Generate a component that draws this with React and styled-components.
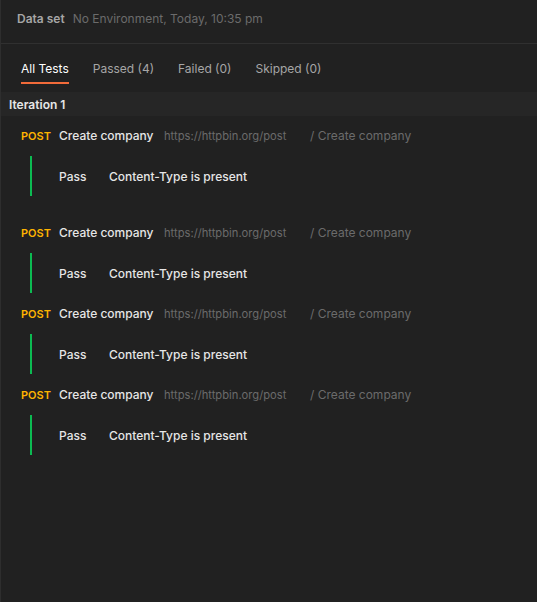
import React from "react";
import styled, { createGlobalStyle } from "styled-components";

const GlobalStyle = createGlobalStyle`
  html, body {
    margin: 0;
    padding: 0;
    background: #212121;
  }
  body {
    font-family: Inter, "Noto Sans", sans-serif;
    -webkit-font-smoothing: antialiased;
  }
`;

const Panel = styled.div`
  width: 537px;
  height: 602px;
  box-sizing: border-box;
  background: #212121;
  border-left: 1px solid #2e2e2e;
  overflow: hidden;
`;

const Header = styled.div`
  display: flex;
  align-items: center;
  gap: 8px;
  height: 44px;
  padding: 0 16px 7px;
  box-sizing: border-box;
  border-bottom: 1px solid #303030;
  font-size: 12px;
`;

const HeaderLabel = styled.span`
  color: #a6a6a6;
  font-weight: 600;
`;

const HeaderMeta = styled.span`
  color: #6b6b6b;
`;

const Tabs = styled.div`
  display: flex;
  gap: 24px;
  padding: 0 20px;
  height: 40px;
  margin-bottom: 8px;
  align-items: stretch;
`;

const Tab = styled.div`
  display: flex;
  align-items: center;
  font-size: 12px;
  color: ${(p) => (p.$active ? "#ffffff" : "#a6a6a6")};
  border-bottom: 2px solid ${(p) => (p.$active ? "#f26b3a" : "transparent")};
  padding-top: 10px;
  box-sizing: border-box;
`;

const IterationBar = styled.div`
  display: flex;
  align-items: center;
  height: 24px;
  padding: 0 8px;
  background: #262626;
  color: #e6e6e6;
  font-size: 12px;
  font-weight: 600;
`;

const Results = styled.div`
  display: flex;
  flex-direction: column;
  padding: 8px 0 0 20px;
`;

const Request = styled.div`
  display: flex;
  flex-direction: column;
  margin-bottom: ${(p) => (p.$extra ? "25px" : "9px")};
`;

const RequestLine = styled.div`
  display: flex;
  align-items: baseline;
  height: 22px;
  line-height: 24px;
  font-size: 12px;
`;

const Method = styled.span`
  color: #ffb400;
  font-weight: 600;
  font-size: 11px;
  width: 38px;
`;

const RequestName = styled.span`
  color: #e6e6e6;
  font-weight: 500;
  width: 105px;
`;

const Url = styled.span`
  color: #6b6b6b;
  font-size: 11.2px;
  width: 146px;
`;

const Path = styled.span`
  color: #6b6b6b;
  font-size: 12px;
`;

const TestBlock = styled.div`
  display: flex;
  align-items: center;
  height: 40px;
  margin: 10px 0 0 9px;
  padding-left: 27px;
  border-left: 2px solid #0cbb52;
  font-size: 12px;
  color: #e6e6e6;
  font-weight: 500;
`;

const Status = styled.span`
  width: 50px;
`;

const requests = [1, 2, 3, 4];

export default function App() {
  return (
    <>
      <GlobalStyle />
      <Panel>
        <Header>
          <HeaderLabel>Data set</HeaderLabel>
          <HeaderMeta>No Environment, Today, 10:35 pm</HeaderMeta>
        </Header>
        <Tabs>
          <Tab $active>All Tests</Tab>
          <Tab>Passed (4)</Tab>
          <Tab>Failed (0)</Tab>
          <Tab>Skipped (0)</Tab>
        </Tabs>
        <IterationBar>Iteration 1</IterationBar>
        <Results>
          {requests.map((r, i) => (
            <Request key={r} $extra={i === 0}>
              <RequestLine>
                <Method>POST</Method>
                <RequestName>Create company</RequestName>
                <Url>https://httpbin.org/post</Url>
                <Path>/ Create company</Path>
              </RequestLine>
              <TestBlock>
                <Status>Pass</Status>
                Content-Type is present
              </TestBlock>
            </Request>
          ))}
        </Results>
      </Panel>
    </>
  );
}
